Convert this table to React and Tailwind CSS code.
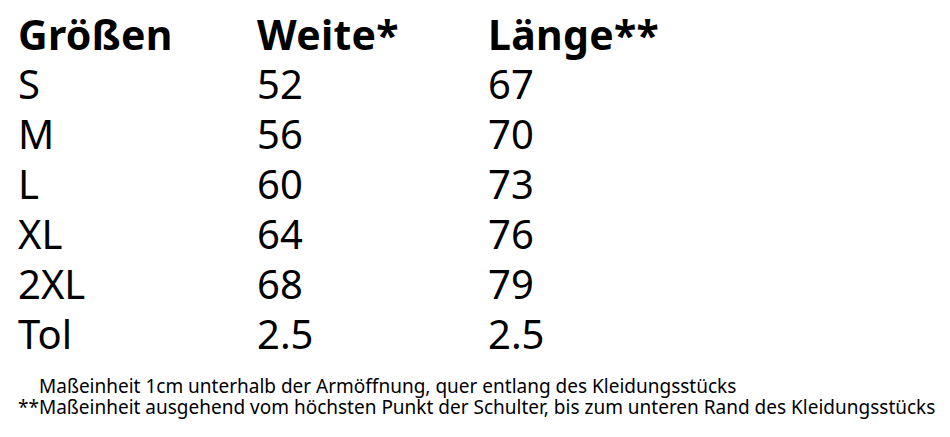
const rows = [
  ["S", "52", "67"],
  ["M", "56", "70"],
  ["L", "60", "73"],
  ["XL", "64", "76"],
  ["2XL", "68", "79"],
  ["Tol", "2.5", "2.5"],
];

export default function App() {
  return (
    <div className="w-[950px] h-[437px] bg-white text-black font-['Noto_Sans',sans-serif] pl-[18px] pt-[9px]">
      <div className="grid grid-cols-[239px_231px_1fr] text-[40px] leading-[50px]">
        <div className="font-bold text-[41px] tracking-[0.3px]">Größen</div>
        <div className="font-bold text-[41px] tracking-[0.3px]">Weite*</div>
        <div className="font-bold text-[41px] tracking-[0.3px]">Länge**</div>
        {rows.map(([size, weite, laenge]) => (
          <>
            <div key={size + "a"}>{size}</div>
            <div key={size + "b"}>{weite}</div>
            <div key={size + "c"}>{laenge}</div>
          </>
        ))}
      </div>

      <div className="mt-[17px] text-[19px] leading-[21px]">
        <div className="pl-[21px]">Maßeinheit 1cm unterhalb der Armöffnung, quer entlang des Kleidungsstücks</div>
        <div>**Maßeinheit ausgehend vom höchsten Punkt der Schulter, bis zum unteren Rand des Kleidungsstücks</div>
      </div>
    </div>
  );
}
